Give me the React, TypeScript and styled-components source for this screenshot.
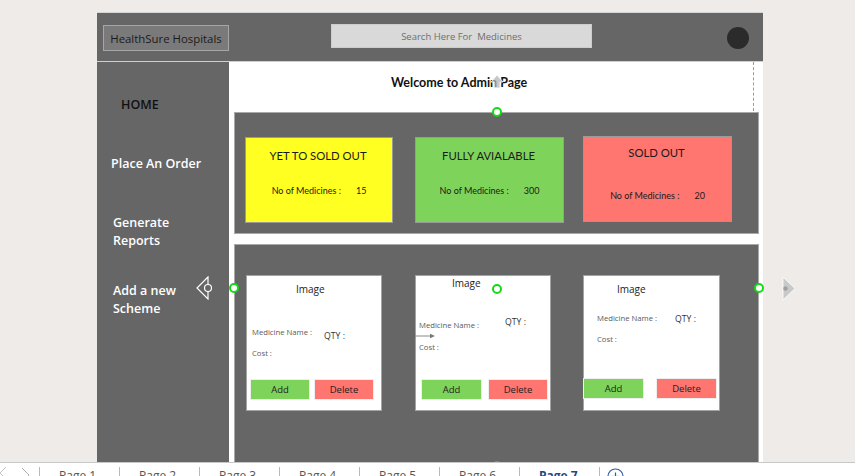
import styled, { createGlobalStyle } from "styled-components";

const GlobalStyle = createGlobalStyle`
  *, *::before, *::after { box-sizing: border-box; }
  html, body { margin: 0; padding: 0; }
  body {
    background: #eeebe8;
    font-family: "Open Sans", "Liberation Sans", sans-serif;
  }
`;

const menu = [
  { label: "HOME", dark: true, top: 34, indent: 24 },
  { label: "Place An Order", top: 41, indent: 14 },
  { label: "Generate\nReports", top: 41, indent: 16 },
  { label: "Add a new\nScheme", top: 32, indent: 16 },
];

const stats = [
  { title: "YET TO SOLD OUT", count: 15, bg: "#ffff21", ml: 10, top: 24, w: 148, pt: 11, gap: 22 },
  { title: "FULLY AVIALABLE", count: 300, bg: "#7ed35b", ml: 22, top: 24, w: 149, pt: 11, gap: 22 },
  { title: "SOLD OUT", count: 20, bg: "#ff7570", ml: 19, top: 23, w: 149, pt: 9, gap: 30 },
];

const products = [
  {
    ml: 11, w: 136,
    img: { x: 49, y: 7 },
    row: { mt: 32, x: 5, w: 72, nameDy: 0, qtyDy: 4 },
    costMt: 7,
    btn: { mt: 21, x: 3, gap: 4, addW: 60, delW: 60 },
  },
  {
    ml: 33, w: 136,
    img: { x: 36, y: 1 },
    row: { mt: 28, x: 3, w: 86, nameDy: 3, qtyDy: 0 },
    costMt: 12,
    btn: { mt: 27, x: 5, gap: 6, addW: 61, delW: 60 },
  },
  {
    ml: 32, w: 137,
    img: { x: 33, y: 7 },
    row: { mt: 18, x: 13, w: 78, nameDy: 0, qtyDy: 1 },
    costMt: 10,
    btn: { mt: 34, x: -1, gap: 12, addW: 61, delW: 61 },
  },
];

const pages = ["Page 1", "Page 2", "Page 3", "Page 4", "Page 5", "Page 6", "Page 7"];

const handles = [
  { x: 234, y: 288 },
  { x: 759, y: 288 },
  { x: 497, y: 112 },
  { x: 497, y: 289 },
  { x: 497, y: 466 },
];

export default function App() {
  return (
    <Root>
      <GlobalStyle />
      <Canvas>
        <Frame>
          <Header>
            <Brand>HealthSure Hospitals</Brand>
            <Search>Search Here For  Medicines</Search>
            <Avatar />
          </Header>
          <Body>
            <Sidebar>
              {menu.map((m) => (
                <MenuItem key={m.label} $dark={m.dark} $top={m.top} $indent={m.indent}>
                  {m.label}
                </MenuItem>
              ))}
            </Sidebar>
            <Main>
              <Welcome>Welcome to Admin Page</Welcome>
              <StatPanel>
                {stats.map((s) => (
                  <StatCard key={s.title} $bg={s.bg} $ml={s.ml} $top={s.top} $w={s.w} $pt={s.pt}>
                    <StatTitle>{s.title}</StatTitle>
                    <StatCount $gap={s.gap}>
                      <span>No of Medicines :</span>
                      <span>{s.count}</span>
                    </StatCount>
                  </StatCard>
                ))}
              </StatPanel>
              <ProductPanel>
                {products.map((p, i) => (
                  <ProductCard key={i} $ml={p.ml} $w={p.w}>
                    <ImageLabel $x={p.img.x} $y={p.img.y}>Image</ImageLabel>
                    <InfoRow $mt={p.row.mt} $x={p.row.x}>
                      <FieldName $w={p.row.w} $dy={p.row.nameDy}>Medicine Name :</FieldName>
                      <Qty $dy={p.row.qtyDy}>QTY :</Qty>
                    </InfoRow>
                    <CostLine $mt={p.costMt} $x={p.row.x}>Cost :</CostLine>
                    <ButtonRow $mt={p.btn.mt} $x={p.btn.x} $gap={p.btn.gap}>
                      <ActionButton $kind="add" $w={p.btn.addW}>Add</ActionButton>
                      <ActionButton $kind="delete" $w={p.btn.delW}>Delete</ActionButton>
                    </ButtonRow>
                  </ProductCard>
                ))}
              </ProductPanel>
            </Main>
          </Body>
        </Frame>
      </Canvas>

      <DashedGuide />
      <RotateHandle viewBox="0 0 12 14">
        <path d="M6 0 L12 7 L9 7 L9 13 L3 13 L3 7 L0 7 Z" fill="#b4b4b4" fillOpacity="0.75" stroke="#fff" strokeWidth="0.8" />
      </RotateHandle>
      <LeftConnector viewBox="0 0 17 24">
        <path d="M12 1 L1 12 L12 23 Z" fill="none" stroke="#fff" strokeWidth="1.2" />
        <circle cx="12" cy="12" r="3.5" fill="#666" stroke="#fff" strokeWidth="1.2" />
      </LeftConnector>
      <RightConnector viewBox="0 0 14 23">
        <path d="M1 0 L13 11.5 L1 23 Z" fill="#c9c9c9" stroke="#fff" strokeWidth="0.8" />
        <circle cx="3.5" cy="11.5" r="2.2" fill="#a0a0a0" />
      </RightConnector>
      <CardArrow viewBox="0 0 21 6">
        <line x1="0" y1="3" x2="17" y2="3" stroke="#8a8a8a" strokeWidth="1" />
        <path d="M15 0.8 L20 3 L15 5.2 Z" fill="#777" />
      </CardArrow>
      {handles.map((h, i) => (
        <Handle key={i} style={{ left: h.x - 5, top: h.y - 5 }} />
      ))}

      <TabBar>
        <NavArrows viewBox="0 0 39 14">
          <polyline points="6,4 0,10 6,16" fill="none" stroke="#c4c4c4" strokeWidth="1" />
          <polyline points="22,5 29,12 22,19" fill="none" stroke="#b0b0b0" strokeWidth="1" />
        </NavArrows>
        {pages.map((p, i) => (
          <Tab key={p} $active={i === pages.length - 1}>
            {p}
          </Tab>
        ))}
        <AddTab>
          <svg width="17" height="17" viewBox="0 0 17 17">
            <circle cx="8.5" cy="8.5" r="7.5" fill="none" stroke="#2e5c9e" strokeWidth="1.2" />
            <line x1="8.5" y1="4.5" x2="8.5" y2="12.5" stroke="#2e5c9e" strokeWidth="1.2" />
            <line x1="4.5" y1="8.5" x2="12.5" y2="8.5" stroke="#2e5c9e" strokeWidth="1.2" />
          </svg>
        </AddTab>
      </TabBar>
    </Root>
  );
}

const Root = styled.div`
  position: relative;
  width: 855px;
  height: 476px;
  overflow: hidden;
  background: #eeebe8;
  display: flex;
  flex-direction: column;
`;

const Canvas = styled.div`
  height: 462px;
  flex-shrink: 0;
  padding: 12px 0 0 97px;
`;

const Frame = styled.div`
  width: 666px;
  height: 450px;
  background: #fff;
  border-top: 1px solid #d6d6d6;
  display: flex;
  flex-direction: column;
`;

const Header = styled.header`
  height: 49px;
  flex-shrink: 0;
  background: #666666;
  border-bottom: 1px solid #cfcfcf;
  display: flex;
  align-items: flex-start;
`;

const Brand = styled.div`
  margin: 12px 0 0 6px;
  width: 126px;
  height: 26px;
  background: #7a7a7a;
  border: 1px solid #a6a6a6;
  color: #1a1a1a;
  font-size: 11.4px;
  display: flex;
  align-items: center;
  justify-content: center;
  white-space: nowrap;
`;

const Search = styled.div`
  margin: 11px 0 0 102px;
  width: 261px;
  height: 24px;
  background: #d9d9d9;
  border: 1px solid #cdcdcd;
  color: #6e6e6e;
  font-size: 9.5px;
  white-space: pre;
  display: flex;
  align-items: center;
  justify-content: center;
`;

const Avatar = styled.div`
  margin: 14px 0 0 135px;
  width: 22px;
  height: 22px;
  border-radius: 50%;
  background: #2b2b2b;
`;

const Body = styled.div`
  flex: 1;
  display: grid;
  grid-template-columns: 132px 1fr;
  min-height: 0;
`;

const Sidebar = styled.nav`
  background: #666666;
  display: flex;
  flex-direction: column;
`;

const MenuItem = styled.div<{ $dark?: boolean; $top: number; $indent: number }>`
  margin-top: ${(p) => p.$top}px;
  padding-left: ${(p) => p.$indent}px;
  color: ${(p) => (p.$dark ? "#111" : "#fff")};
  font-size: 12.5px;
  font-weight: 600;
  line-height: 18px;
  white-space: pre-line;
`;

const Main = styled.main`
  padding: 0 4px 0 5px;
  display: flex;
  flex-direction: column;
  min-height: 0;
`;

const Welcome = styled.div`
  height: 50px;
  flex-shrink: 0;
  padding: 13px 0 0 157px;
  font-family: Lato, "Liberation Sans", sans-serif;
  font-weight: 700;
  font-size: 12.5px;
  line-height: 16px;
  color: #111;
`;

const Panel = styled.section`
  background: #666666;
  border: 1px solid #a9a9a9;
  display: flex;
  align-items: flex-start;
  flex-shrink: 0;
`;

const StatPanel = styled(Panel)`
  height: 122px;
`;

const ProductPanel = styled(Panel)`
  margin-top: 10px;
  flex: 1;
  border-bottom: none;
`;

const StatCard = styled.div<{ $bg: string; $ml: number; $top: number; $w: number; $pt: number }>`
  margin: ${(p) => p.$top}px 0 0 ${(p) => p.$ml}px;
  width: ${(p) => p.$w}px;
  height: 86px;
  padding-top: ${(p) => p.$pt}px;
  background: ${(p) => p.$bg};
  border: 1px solid #9a9a9a;
  display: flex;
  flex-direction: column;
  align-items: center;
  font-family: Lato, "Liberation Sans", sans-serif;
  color: #1a1a1a;
`;

const StatTitle = styled.div`
  font-size: 11.3px;
  line-height: 14px;
  margin-left: -2px;
`;

const StatCount = styled.div<{ $gap: number }>`
  margin-top: ${(p) => p.$gap}px;
  font-size: 9px;
  line-height: 11px;
  display: flex;
  gap: 15px;
`;

const ProductCard = styled.div<{ $ml: number; $w: number }>`
  margin: 30px 0 0 ${(p) => p.$ml}px;
  width: ${(p) => p.$w}px;
  height: 136px;
  background: #fff;
  border: 1px solid #a3a3a3;
  display: flex;
  flex-direction: column;
  align-items: flex-start;
`;

const ImageLabel = styled.div<{ $x: number; $y: number }>`
  margin: ${(p) => p.$y}px 0 0 ${(p) => p.$x}px;
  font-size: 10px;
  line-height: 12px;
  color: #222;
`;

const InfoRow = styled.div<{ $mt: number; $x: number }>`
  margin: ${(p) => p.$mt}px 0 0 ${(p) => p.$x}px;
  display: flex;
  align-items: flex-start;
`;

const FieldName = styled.div<{ $w?: number; $dy?: number }>`
  width: ${(p) => (p.$w ? `${p.$w}px` : "auto")};
  margin-top: ${(p) => p.$dy ?? 0}px;
  font-size: 7.7px;
  line-height: 10px;
  color: #5a5a5a;
  white-space: nowrap;
`;

const Qty = styled.div<{ $dy: number }>`
  margin-top: ${(p) => p.$dy}px;
  font-size: 8.7px;
  line-height: 10px;
  color: #333;
`;

const CostLine = styled(FieldName)<{ $mt: number; $x: number }>`
  margin: ${(p) => p.$mt}px 0 0 ${(p) => p.$x}px;
`;

const ButtonRow = styled.div<{ $mt: number; $x: number; $gap: number }>`
  margin: ${(p) => p.$mt}px 0 0 ${(p) => p.$x}px;
  display: flex;
  gap: ${(p) => p.$gap}px;
`;

const ActionButton = styled.div<{ $kind: "add" | "delete"; $w: number }>`
  width: ${(p) => p.$w}px;
  height: 21px;
  background: ${(p) => (p.$kind === "add" ? "#7ed35b" : "#ff7570")};
  border: 1px solid #eeeeee;
  color: #1e1e1e;
  font-size: 9.5px;
  display: flex;
  align-items: center;
  justify-content: center;
`;

const TabBar = styled.footer`
  position: relative;
  z-index: 2;
  flex: 1;
  background: #fff;
  border-top: 1px solid #c8c8c8;
  display: flex;
  align-items: flex-start;
`;

const NavArrows = styled.svg`
  width: 39px;
  height: 14px;
  flex-shrink: 0;
`;

const Tab = styled.div<{ $active?: boolean }>`
  width: 80px;
  flex-shrink: 0;
  margin-top: 4px;
  padding: 1px 0 0 19px;
  border-left: 1px solid #b8b8b8;
  height: 20px;
  font-size: 12px;
  line-height: 16px;
  color: ${(p) => (p.$active ? "#1d4a80" : "#555")};
  font-weight: ${(p) => (p.$active ? 700 : 400)};
  white-space: nowrap;
`;

const AddTab = styled.div`
  margin-top: 4px;
  padding: 1px 0 0 7px;
  border-left: 1px solid #b8b8b8;
  height: 20px;
  display: flex;
`;

const Overlay = styled.svg`
  position: absolute;
  pointer-events: none;
`;

const RotateHandle = styled(Overlay)`
  left: 491px;
  top: 75px;
  width: 12px;
  height: 14px;
`;

const LeftConnector = styled(Overlay)`
  left: 196px;
  top: 276px;
  width: 17px;
  height: 24px;
`;

const RightConnector = styled(Overlay)`
  left: 782px;
  top: 277px;
  width: 14px;
  height: 23px;
`;

const CardArrow = styled(Overlay)`
  left: 415px;
  top: 333px;
  width: 21px;
  height: 6px;
`;

const DashedGuide = styled.div`
  position: absolute;
  left: 753px;
  top: 62px;
  height: 49px;
  border-left: 1px dashed #9a9a9a;
`;

const Handle = styled.span`
  position: absolute;
  z-index: 1;
  width: 10px;
  height: 10px;
  border-radius: 50%;
  border: 2px solid #16d916;
  background: #fff;
`;
